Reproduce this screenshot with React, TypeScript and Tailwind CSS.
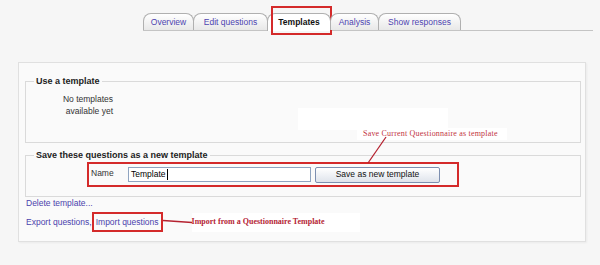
import React from "react";

const tabs = [
  { label: "Overview", w: "w-[51px]" },
  { label: "Edit questions", w: "w-[75px]" },
  { label: "Templates", w: "w-[64px]", active: true },
  { label: "Analysis", w: "w-[49px]" },
  { label: "Show responses", w: "w-[83px]" },
];

const Tabs = () => (
  <div className="ml-[143px] mt-[13px] flex w-[450px] border-b border-[#c4c4c4]">
    {tabs.map((t) => (
      <div
        key={t.label}
        className={`relative -mr-px flex h-[17px] items-center justify-center rounded-t-[8px] border border-b-0 border-[#b0b0b0] text-[8.5px] ${t.w} ${
          t.active
            ? "-mb-px h-[18px] bg-white font-bold text-[#111]"
            : "bg-linear-to-b from-white to-[#e8e8e8] text-[#4d44b0]"
        }`}
      >
        {t.label}
        {t.active && (
          <span className="absolute -top-[8px] -bottom-[4px] left-[3px] -right-[2px] border-2 border-[#d42a2a]" />
        )}
      </div>
    ))}
  </div>
);

const App = () => {
  return (
    <div className="h-[265px] w-[600px] overflow-hidden bg-[#f6f6f6] font-['Liberation_Sans',Arial,sans-serif] text-[#222]">
      <Tabs />

      <div className="relative ml-[18px] mt-[31px] w-[568px] border border-[#e0e0e0] bg-[#fafafa] pb-[9px] pl-[6px] pr-[4px] pt-[13px] shadow-[1px_1px_2px_rgba(0,0,0,0.05)]">
        {/* use a template */}
        <fieldset className="border border-[#dadada] pb-[25px]">
          <legend className="ml-[8px] px-[2px] text-[9px] font-bold leading-[11px] text-[#222]">
            Use a template
          </legend>
          <div className="mt-[6px] w-[87px] text-right text-[8.5px] leading-[12px] text-[#333]">
            No templates
            <br />
            available yet
          </div>
        </fieldset>

        {/* save as new template */}
        <fieldset className="mt-[7px] border border-[#dadada] pb-[9px]">
          <legend className="ml-[8px] px-[2px] text-[9px] font-bold leading-[11px] text-[#222]">
            Save these questions as a new template
          </legend>
          <div className="ml-[61px] mt-[1px] flex h-[25px] w-[372px] items-center border-2 border-[#d42a2a] pl-[2px]">
            <span className="w-[37px] -translate-y-[1px] text-[8.5px] text-[#333]">Name</span>
            <div className="flex h-[15px] w-[183px] items-center border border-[#8fa4c0] bg-white pl-[2px] text-[8.5px] text-black">
              Template
              <span className="ml-px h-[11px] w-px bg-black" />
            </div>
            <button className="ml-[4px] h-[16px] w-[125px] rounded-[2px] border border-[#7d8fb0] bg-linear-to-b from-white to-[#dfe4ec] text-[8.5px] text-[#111]">
              Save as new template
            </button>
          </div>
        </fieldset>

        <div className="ml-[1px] text-[8.5px] leading-[12px] text-[#4a42ad]">Delete template...</div>

        <div className="ml-[1px] mt-[3px] flex h-[20px] items-center text-[8.5px] text-[#4a42ad]">
          <span>Export questions,</span>
          <span className="flex h-[20px] items-center border-2 border-[#d42a2a] px-[2px]">Import questions</span>
          <svg width="29" height="6" className="shrink-0">
            <line x1="0" y1="1.5" x2="29" y2="3.5" stroke="#b52230" strokeWidth="1.5" />
          </svg>
          <span className="flex h-[19px] w-[168px] items-center bg-white font-['Liberation_Serif','Times_New_Roman',serif] text-[8px] font-bold text-[#b52535]">
            Import from a Questionnaire Template
          </span>
        </div>

        {/* annotation overlays */}
        <div className="absolute left-[279px] top-[45px] h-[22px] w-[150px] bg-white" />
        <div className="absolute left-[338px] top-[65px] flex h-[12px] w-[150px] items-center bg-white pl-[6px] font-['Liberation_Serif','Times_New_Roman',serif] text-[8px] tracking-[0.2px] text-[#c23542]">
          Save Current Questionnaire as template
        </div>
        <svg className="absolute left-[345px] top-[73px]" width="26" height="30">
          <line x1="22" y1="1" x2="4" y2="27" stroke="#b52230" strokeWidth="1.3" />
        </svg>
      </div>
    </div>
  );
};

export default App;
